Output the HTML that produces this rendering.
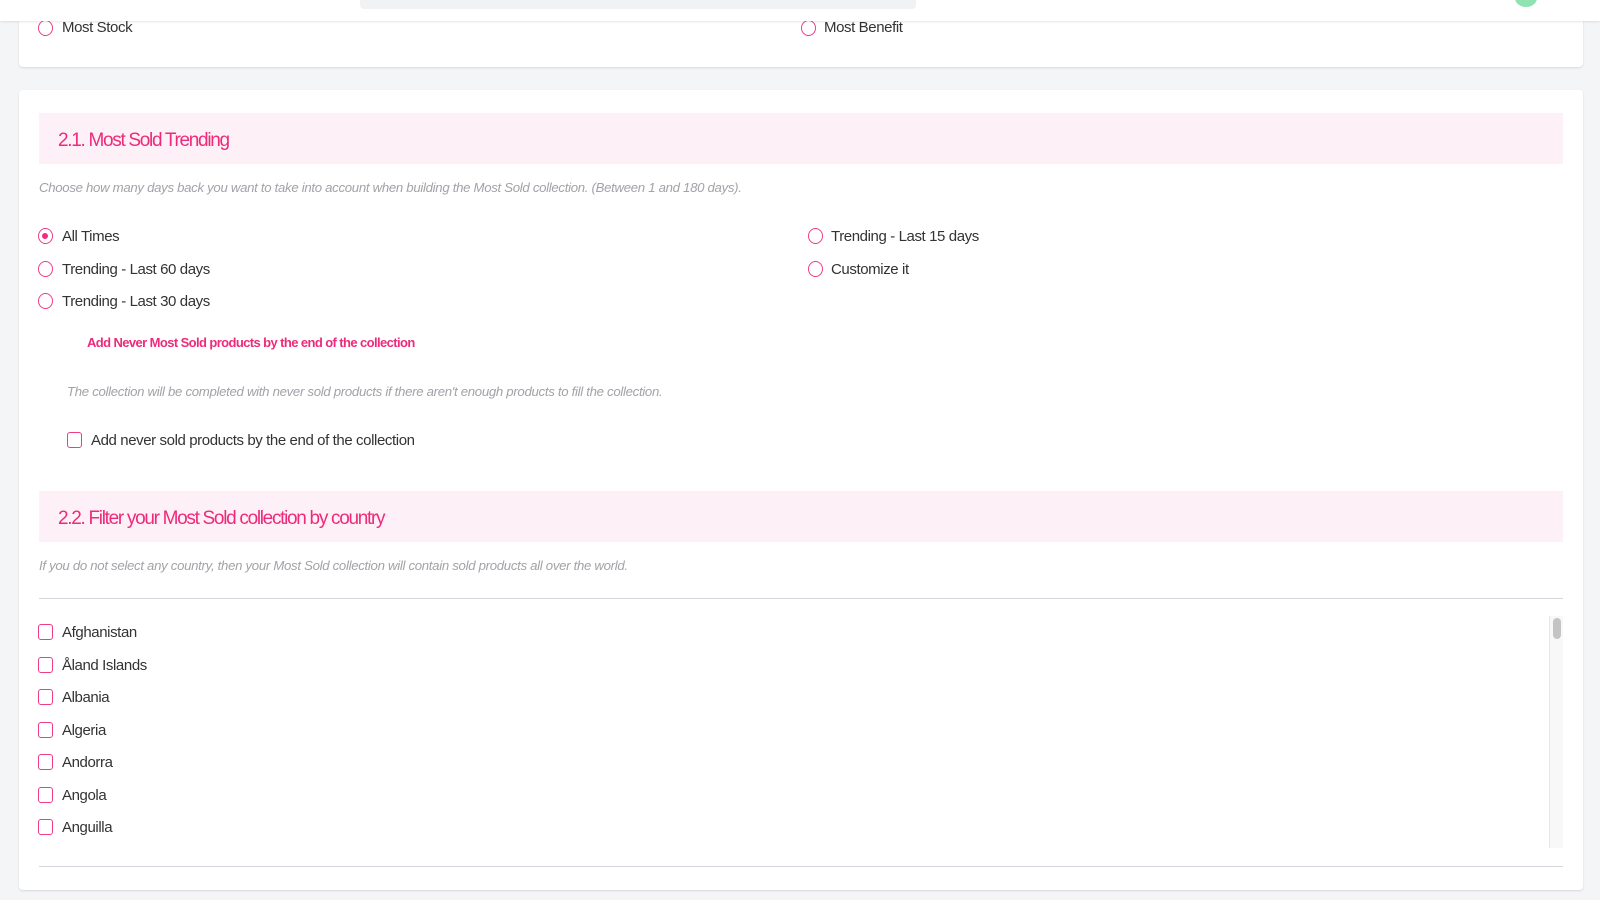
<!DOCTYPE html>
<html><head><meta charset="utf-8"><style>
*{margin:0;padding:0;box-sizing:border-box}
body{width:1600px;height:900px;background:#f4f5f7;font-family:"Liberation Sans",sans-serif;position:relative;overflow:hidden;color:#333}
.abs{position:absolute}
.hdr{left:0;top:0;width:1600px;height:21px;background:#fff;box-shadow:0 1px 2px rgba(0,0,0,.1);z-index:5}
.card{background:#fff;border-radius:4px;box-shadow:0 1px 2px rgba(0,0,0,.12)}
.t{font-size:15px;letter-spacing:-0.4px;color:#333;white-space:nowrap;line-height:18px}
.radio{width:15px;height:16px;border:1.5px solid #ef3c87;border-radius:50%;background:#fff}
.radio.on::after{content:"";position:absolute;left:3px;top:3.5px;width:6px;height:6px;border-radius:50%;background:#ef2d7f}
.cb{width:15px;height:16px;border:1.5px solid #ef3c87;border-radius:3px;background:#fff}
.band{left:39px;width:1524px;height:51px;background:#fdf0f6}
.band span{position:absolute;left:19px;top:17px;font-size:19px;color:#ee2a7b;letter-spacing:-1.3px;white-space:nowrap}
.desc{font-size:13.2px;font-style:italic;color:#a2a2a8;letter-spacing:-0.3px;white-space:nowrap}
.hr{height:1px;background:#d4d8dd}
</style></head><body>
<div class="abs hdr"><div class="abs" style="left:360px;top:0;width:556px;height:9px;background:#f1f2f4;border-radius:0 0 4px 4px"></div><div class="abs" style="left:1515px;top:-11px;width:22px;height:18px;border-radius:50%;background:#8fe3b0"></div></div>

<div class="abs card" style="left:19px;top:-10px;width:1564px;height:77px"></div>
<div class="abs radio" style="left:38px;top:20px"></div><div class="abs t" style="left:62px;top:19px">Most Stock</div>
<div class="abs radio" style="left:801px;top:20px"></div><div class="abs t" style="left:824px;top:19px">Most Benefit</div>

<div class="abs card" style="left:19px;top:90px;width:1564px;height:800px"></div>
<div class="abs band" style="top:113px"><span>2.1. Most Sold Trending</span></div>
<div class="abs desc" style="left:39px;top:180px">Choose how many days back you want to take into account when building the Most Sold collection. (Between 1 and 180 days).</div>

<div class="abs radio on" style="left:38px;top:228px"></div><div class="abs t" style="left:62px;top:228px">All Times</div>
<div class="abs radio" style="left:38px;top:261px"></div><div class="abs t" style="left:62px;top:261px">Trending - Last 60 days</div>
<div class="abs radio" style="left:38px;top:293px"></div><div class="abs t" style="left:62px;top:293px">Trending - Last 30 days</div>
<div class="abs radio" style="left:808px;top:228px"></div><div class="abs t" style="left:831px;top:228px">Trending - Last 15 days</div>
<div class="abs radio" style="left:808px;top:261px"></div><div class="abs t" style="left:831px;top:261px">Customize it</div>

<div class="abs" style="left:87px;top:335px;font-size:13px;font-weight:bold;color:#ee2a7b;letter-spacing:-0.6px;white-space:nowrap">Add Never Most Sold products by the end of the collection</div>
<div class="abs desc" style="left:67px;top:384px">The collection will be completed with never sold products if there aren't enough products to fill the collection.</div>
<div class="abs cb" style="left:67px;top:432px"></div><div class="abs t" style="left:91px;top:432px">Add never sold products by the end of the collection</div>

<div class="abs band" style="top:491px"><span>2.2. Filter your Most Sold collection by country</span></div>
<div class="abs desc" style="left:39px;top:558px">If you do not select any country, then your Most Sold collection will contain sold products all over the world.</div>
<div class="abs hr" style="left:39px;top:598px;width:1524px"></div>

<div class="abs cb" style="left:38px;top:624px"></div><div class="abs t" style="left:62px;top:624px">Afghanistan</div>
<div class="abs cb" style="left:38px;top:657px"></div><div class="abs t" style="left:62px;top:657px">Åland Islands</div>
<div class="abs cb" style="left:38px;top:689px"></div><div class="abs t" style="left:62px;top:689px">Albania</div>
<div class="abs cb" style="left:38px;top:722px"></div><div class="abs t" style="left:62px;top:722px">Algeria</div>
<div class="abs cb" style="left:38px;top:754px"></div><div class="abs t" style="left:62px;top:754px">Andorra</div>
<div class="abs cb" style="left:38px;top:787px"></div><div class="abs t" style="left:62px;top:787px">Angola</div>
<div class="abs cb" style="left:38px;top:819px"></div><div class="abs t" style="left:62px;top:819px">Anguilla</div>

<div class="abs" style="left:1549px;top:616px;width:14px;height:232px;background:#f8f8f8;border-left:1px solid #e6e6e6"></div>
<div class="abs" style="left:1553px;top:618px;width:8px;height:21px;border-radius:4px;background:#c4c4c4"></div>
<div class="abs hr" style="left:39px;top:866px;width:1524px"></div>
</body></html>
